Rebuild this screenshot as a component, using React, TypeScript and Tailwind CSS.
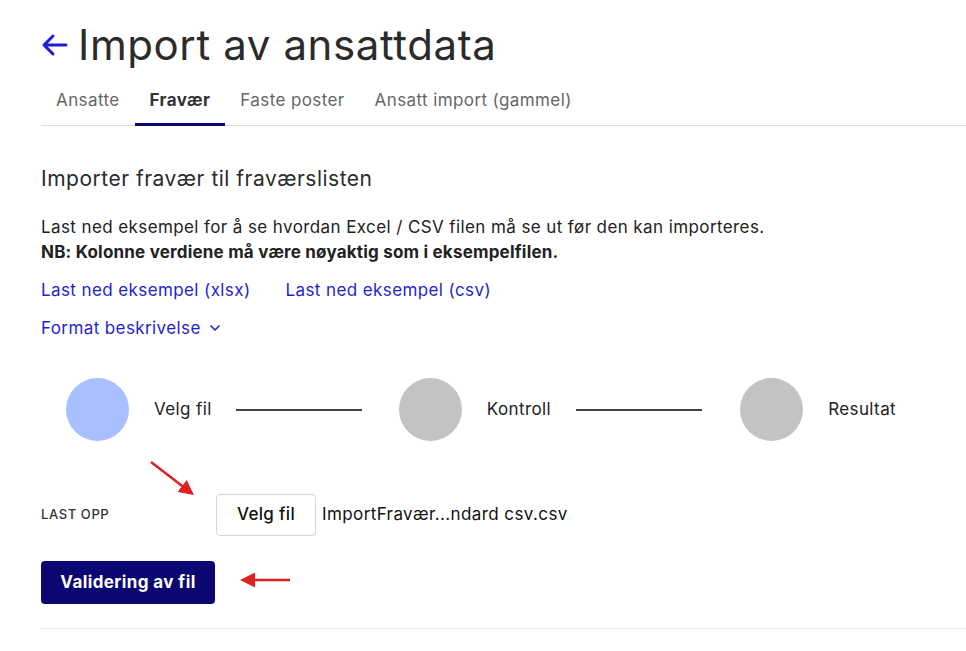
import { ChevronDown } from 'lucide-react';

const tabs = ['Ansatte', 'Fravær', 'Faste poster', 'Ansatt import (gammel)'];

function Step({ label, active }: { label: string; active?: boolean }) {
  return (
    <div className="flex items-center">
      <div className={`w-[63px] h-[63px] rounded-full ${active ? 'bg-[#a8c0ff]' : 'bg-[#c3c3c3]'}`} />
      <span className="ml-[25px] text-[17px] tracking-[0.4px] text-[#222]">{label}</span>
    </div>
  );
}

function App() {
  return (
    <div className="relative min-h-screen bg-white text-[#2b2b2b]" style={{ fontFamily: 'Inter, "Liberation Sans", sans-serif' }}>
      <div className="pl-[41px]">
        {/* Header */}
        <div className="flex items-center pt-[22px] h-[68px]">
          <svg width="28" height="24" viewBox="0 0 28 24" className="-ml-[1px] text-[#1c1cd6]">
            <path d="M26 12H4M13 3l-9 9 9 9" fill="none" stroke="currentColor" strokeWidth="3" strokeLinecap="round" strokeLinejoin="round" />
          </svg>
          <h1 className="ml-[10px] text-[42px] leading-none text-[#2b2b2b] tracking-[0.6px]">Import av ansattdata</h1>
        </div>

        {/* Tabs */}
        <div className="flex mt-[20px] border-b border-[#dcdcdc]">
          {tabs.map((t) => (
            <div
              key={t}
              className={`px-[15px] pb-[11px] text-[17px] leading-[24px] tracking-[0.4px] border-b-[3px] -mb-px ${
                t === 'Fravær' ? 'border-[#0b0872] font-bold text-[#333]' : 'border-transparent text-[#666]'
              }`}
            >
              {t}
            </div>
          ))}
        </div>

        {/* Content */}
        <div className="pt-[40px]">
          <h2 className="text-[21px] leading-[26px] tracking-[0.5px] text-[#2b2b2b]">Importer fravær til fraværslisten</h2>
          <p className="mt-[23px] text-[17px] leading-[25px] tracking-[0.4px] text-[#222]">
            Last ned eksempel for å se hvordan Excel / CSV filen må se ut før den kan importeres.
            <br />
            <span className="font-bold tracking-[0.2px]">NB: Kolonne verdiene må være nøyaktig som i eksempelfilen.</span>
          </p>
          <div className="flex gap-[35px] mt-[13px] text-[17px] tracking-[0.4px] text-[#1f1fcf]">
            <a>Last ned eksempel (xlsx)</a>
            <a>Last ned eksempel (csv)</a>
          </div>
          <div className="flex items-center gap-[6px] mt-[12px] text-[17px] tracking-[0.4px] text-[#1f1fcf]">
            <span>Format beskrivelse</span>
            <ChevronDown size={16} strokeWidth={2.5} />
          </div>

          {/* Stepper */}
          <div className="flex items-center mt-[37px] pl-[25px]">
            <Step label="Velg fil" active />
            <div className="w-[126px] h-[2px] bg-[#444] ml-[24px] mr-[37px]" />
            <Step label="Kontroll" />
            <div className="w-[126px] h-[2px] bg-[#444] ml-[25px] mr-[38px]" />
            <Step label="Resultat" />
          </div>

          {/* Upload */}
          <div className="flex items-center mt-[53px]">
            <span className="w-[175px] text-[13px] tracking-[0.6px] font-medium text-[#333] uppercase">Last opp</span>
            <button className="w-[100px] h-[42px] border border-[#d4d4d4] rounded-[4px] bg-white text-[17px] tracking-[0.3px] font-medium text-[#111]">
              Velg fil
            </button>
            <span className="ml-[6px] text-[17px] tracking-[0.4px] text-[#111]">ImportFravær...ndard csv.csv</span>
          </div>

          <button className="mt-[25px] w-[174px] h-[43px] rounded-[4px] bg-[#0b0772] text-white text-[17px] tracking-[0.4px] font-bold">
            Validering av fil
          </button>

          <div className="mt-[24px] border-b border-[#e6e6e6]" />
        </div>
      </div>

      {/* Annotation arrows */}
      <svg className="absolute left-0 top-0 pointer-events-none" width="966" height="651">
        <defs>
          <marker id="ah" markerWidth="6" markerHeight="6" refX="4" refY="3" orient="auto">
            <path d="M0,0 L6,3 L0,6 Z" fill="#e02020" />
          </marker>
        </defs>
        <line x1="151" y1="462" x2="190" y2="492" stroke="#e02020" strokeWidth="2.5" markerEnd="url(#ah)" />
        <line x1="290" y1="580" x2="245" y2="580" stroke="#e02020" strokeWidth="2.5" markerEnd="url(#ah)" />
      </svg>
    </div>
  );
}

export default App;
